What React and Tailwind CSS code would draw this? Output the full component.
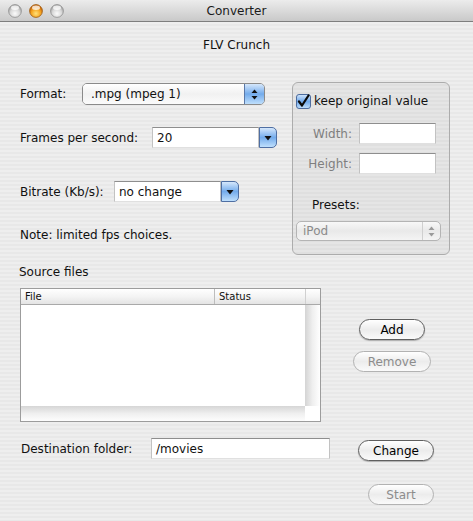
import React from "react";

const stripes =
  "bg-[image:repeating-linear-gradient(to_bottom,#eeeeee_0px,#eeeeee_2px,#e8e8e8_2px,#e8e8e8_4px)]";

const Light = ({ orange }) => (
  <svg width="14" height="14" viewBox="0 0 14 14">
    <defs>
      <radialGradient id={orange ? "lo" : "lg"} cx="50%" cy="70%" r="60%">
        <stop offset="0%" stopColor={orange ? "#ffe27a" : "#fbfbfb"} />
        <stop offset="60%" stopColor={orange ? "#f5a623" : "#d9d9d9"} />
        <stop offset="100%" stopColor={orange ? "#c8650a" : "#a9a9a9"} />
      </radialGradient>
    </defs>
    <circle cx="7" cy="7" r="6.4" fill={`url(#${orange ? "lo" : "lg"})`} stroke={orange ? "#9a5a10" : "#8e8e8e"} strokeWidth="0.8" />
    <ellipse cx="7" cy="3.8" rx="4" ry="2.2" fill="white" opacity="0.75" />
  </svg>
);

const UpDown = ({ color = "#111" }) => (
  <svg width="7" height="11" viewBox="0 0 7 11">
    <path d="M3.5 0.5 L6.5 4 L0.5 4 Z" fill={color} />
    <path d="M3.5 10.5 L6.5 7 L0.5 7 Z" fill={color} />
  </svg>
);

const Down = () => (
  <svg width="8" height="6" viewBox="0 0 8 6">
    <path d="M0.5 1 L7.5 1 L4 5.5 Z" fill="#111" />
  </svg>
);

const Field = ({ className = "", children }) => (
  <div
    className={`bg-white border border-t-[#8e8e8e] border-x-[#c2c2c2] border-b-[#e0e0e0] flex items-center ${className}`}
  >
    {children}
  </div>
);

const Combo = ({ fieldW, value }) => (
  <div className="flex h-[21px]">
    <Field className={`${fieldW} h-[21px] pl-[4px]`}>{value}</Field>
    <div className="w-[18px] h-[21px] rounded-r-[5px] border border-[#4f6fa3] bg-gradient-to-b from-[#d5e7fb] via-[#73abeb] to-[#bfdffc] flex items-center justify-center">
      <Down />
    </div>
  </div>
);

const Button = ({ w, disabled, children }) => (
  <div
    className={`${w} h-[21px] rounded-full border flex items-center justify-center leading-none bg-gradient-to-b from-[#ffffff] via-[#ececec] to-[#fafafa] ${
      disabled
        ? "border-[#b2b2b2] text-[#8c8c8c]"
        : "border-[#5f5f5f] text-black shadow-[0_1px_1px_rgba(0,0,0,0.25)]"
    }`}
  >
    {children}
  </div>
);

export default function App() {
  return (
    <div className="w-[473px] h-[521px] overflow-hidden font-['DejaVu_Sans',sans-serif] text-[12px] text-[#111]">
      {/* title bar */}
      <div className="relative h-[22px] bg-gradient-to-b from-[#ececec] to-[#c9c9c9] border-b border-[#7e7e7e] flex items-center">
        <div className="flex items-center gap-[7px] pl-[8px]">
          <Light />
          <Light orange />
          <Light />
        </div>
        <div className="absolute inset-0 flex items-center justify-center text-[12px] text-[#1a1a1a]">
          Converter
        </div>
      </div>

      <div className={`h-[499px] px-[20px] ${stripes}`}>
        <div className="pt-[15px] leading-[16px] text-center">FLV Crunch</div>

        <div className="flex mt-[29px]">
          {/* left column */}
          <div className="w-[272px] flex flex-col">
            <div className="mt-[1px] h-[22px] flex items-center">
              <div className="w-[62px]">Format:</div>
              <div className="w-[183px] h-[22px] rounded-[5px] border border-[#8a8a8a] flex overflow-hidden">
                <div className="flex-1 pl-[8px] flex items-center bg-gradient-to-b from-[#ffffff] via-[#f1f1f1] to-[#fbfbfb]">
                  .mpg (mpeg 1)
                </div>
                <div className="w-[20px] border-l border-[#5a78a8] bg-gradient-to-b from-[#d5e7fb] via-[#73abeb] to-[#bfdffc] flex items-center justify-center">
                  <UpDown />
                </div>
              </div>
            </div>

            <div className="mt-[22px] h-[21px] flex items-center">
              <div className="w-[132px]">Frames per second:</div>
              <Combo fieldW="w-[107px]" value="20" />
            </div>

            <div className="mt-[33px] h-[21px] flex items-center">
              <div className="w-[94px]">Bitrate (Kb/s):</div>
              <Combo fieldW="w-[107px]" value="no change" />
            </div>

            <div className="mt-[25px] leading-[16px]">Note: limited fps choices.</div>
          </div>

          {/* right group box */}
          <div className="w-[158px] h-[173px] rounded-[6px] border border-[#acacac] bg-black/[0.035] pt-[10px] pl-[3px]">
            <div className="h-[16px] flex items-center gap-[3px]">
              <svg width="15" height="15" viewBox="0 0 15 15">
                <defs>
                  <linearGradient id="cb" x1="0" y1="0" x2="0" y2="1">
                    <stop offset="0%" stopColor="#d5e7fb" />
                    <stop offset="50%" stopColor="#6fa8ea" />
                    <stop offset="100%" stopColor="#c2e0fc" />
                  </linearGradient>
                </defs>
                <rect x="0.5" y="0.5" width="14" height="14" rx="2.5" fill="url(#cb)" stroke="#4d6c9e" />
                <path d="M3 7.5 L6 11.5 L12.5 1.5" fill="none" stroke="#0a0a0a" strokeWidth="2.2" strokeLinecap="round" strokeLinejoin="round" />
              </svg>
              <span>keep original value</span>
            </div>

            <div className="mt-[14px] h-[21px] flex items-center">
              <div className="w-[56px] text-right text-[#7f7f7f]">Width:</div>
              <Field className="ml-[7px] w-[77px] h-[21px]" />
            </div>
            <div className="mt-[9px] h-[21px] flex items-center">
              <div className="w-[56px] text-right text-[#7f7f7f]">Height:</div>
              <Field className="ml-[7px] w-[77px] h-[21px]" />
            </div>

            <div className="mt-[23px] pl-[16px] leading-[16px]">Presets:</div>

            <div className="mt-[8px] w-[145px] h-[20px] rounded-[5px] border border-[#b4b4b4] bg-gradient-to-b from-[#f8f8f8] via-[#e9e9e9] to-[#f4f4f4] flex items-center text-[#8a8a8a]">
              <div className="flex-1 pl-[6px]">iPod</div>
              <div className="w-[18px] h-full border-l border-[#cfcfcf] flex items-center justify-center">
                <UpDown color="#9a9a9a" />
              </div>
            </div>
          </div>
        </div>

        <div className="mt-[9px] -ml-[1px] leading-[16px]">Source files</div>

        <div className="flex mt-[8px]">
          {/* table */}
          <div className="w-[301px] h-[134px] border border-[#9c9c9c] bg-white flex flex-col">
            <div className="h-[16px] flex border-b border-[#a9a9a9] bg-gradient-to-b from-[#ffffff] via-[#f4f4f4] to-[#e4e4e4] text-[10px] leading-none">
              <div className="w-[194px] pl-[4px] flex items-center border-r border-[#bdbdbd]">File</div>
              <div className="w-[91px] pl-[4px] flex items-center border-r border-[#d0d0d0]">Status</div>
              <div className="flex-1" />
            </div>
            <div className="flex-1 flex">
              <div className="flex-1" />
              <div className="w-[15px] bg-gradient-to-r from-[#d4d4d4] via-[#efefef] to-[#ffffff]" />
            </div>
            <div className="h-[15px] flex">
              <div className="flex-1 bg-gradient-to-b from-[#d6d6d6] via-[#efefef] to-[#fdfdfd]" />
              <div className="w-[15px] bg-white" />
            </div>
          </div>

          <div className="ml-[31px] w-[80px] pt-[31px] flex flex-col items-center">
            <Button w="w-[66px]">Add</Button>
            <div className="mt-[11px]">
              <Button w="w-[78px]" disabled>
                Remove
              </Button>
            </div>
          </div>
        </div>

        <div className="mt-[16px] flex items-start">
          <div className="ml-[1px] w-[130px] h-[21px] flex items-center">Destination folder:</div>
          <Field className="w-[179px] h-[21px] pl-[4px]">/movies</Field>
          <div className="ml-[28px] mt-[2px]">
            <Button w="w-[76px]">Change</Button>
          </div>
        </div>

        <div className="mt-[23px] ml-[348px]">
          <Button w="w-[66px]" disabled>
            Start
          </Button>
        </div>
      </div>
    </div>
  );
}
